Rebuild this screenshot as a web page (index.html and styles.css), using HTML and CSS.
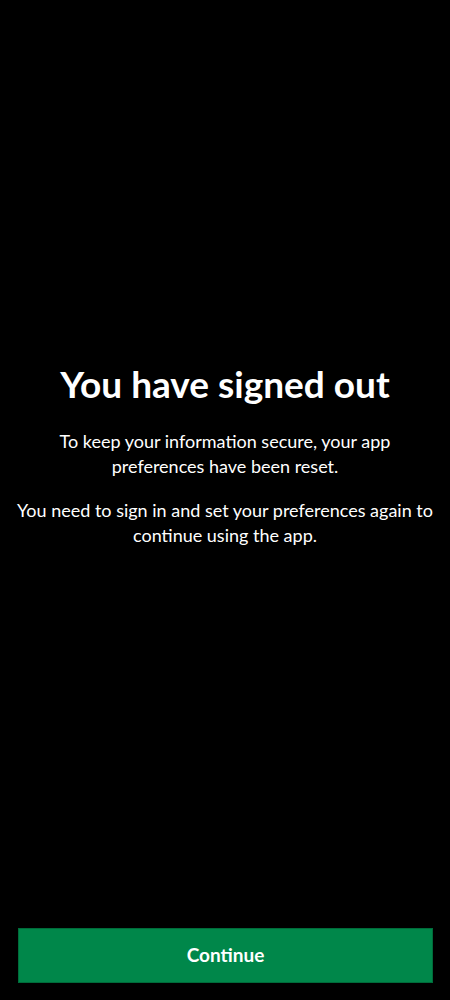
FILE: index.html
```html
<!DOCTYPE html>
<html lang="en">
<head>
<meta charset="utf-8">
<title>You have signed out</title>
<link rel="stylesheet" href="styles.css">
</head>
<body>
<div class="screen">
  <main class="content">
    <h1 class="title">You have signed out</h1>
    <p class="body-text">To keep your information secure, your app preferences have been reset.</p>
    <p class="body-text">You need to sign in and set your preferences again to continue using the app.</p>
  </main>
  <div class="actions">
    <button class="primary-button" type="button">Continue</button>
  </div>
</div>
</body>
</html>
```

FILE: styles.css
```css
html, body {
  margin: 0;
  padding: 0;
  background: #000;
}
body {
  font-family: Lato, "Noto Sans", "Liberation Sans", sans-serif;
  color: #fff;
}
.screen {
  height: 1000px;
  display: flex;
  flex-direction: column;
}
.content {
  flex: 1;
  display: flex;
  flex-direction: column;
  justify-content: center;
  align-items: center;
  padding: 0 12px 16px;
  text-align: center;
}
.title {
  margin: 0 0 25px;
  font-size: 37px;
  line-height: 40px;
  font-weight: 700;
}
.body-text {
  margin: 0 0 19px;
  font-size: 18px;
  line-height: 25px;
}
.body-text:last-child {
  margin-bottom: 0;
}
.actions {
  padding: 0 17px 17px 18px;
}
.primary-button {
  display: block;
  width: 100%;
  height: 55px;
  background: #00874a;
  border: 1px solid #006b3a;
  color: #fff;
  font-family: inherit;
  font-size: 19px;
  font-weight: 700;
  padding: 0 0 3px;
}
```
